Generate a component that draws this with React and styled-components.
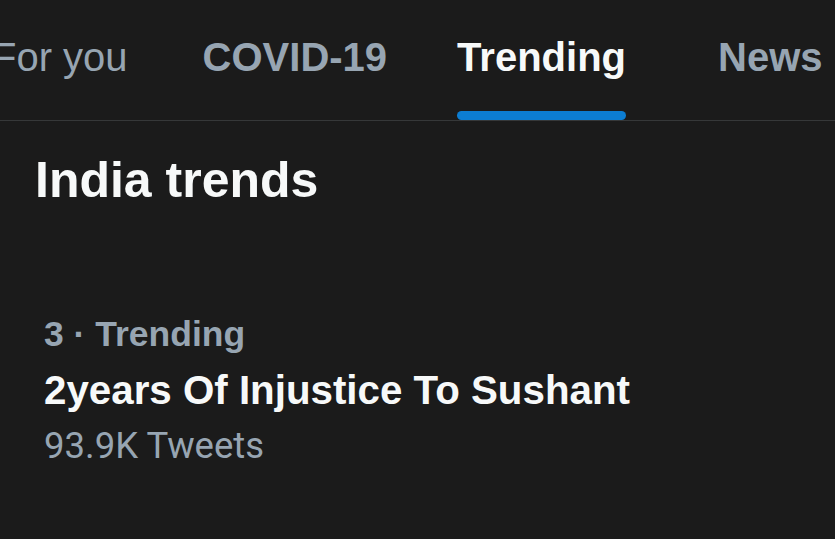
import React from "react";
import styled, { createGlobalStyle } from "styled-components";

const GlobalStyle = createGlobalStyle`
  html, body {
    margin: 0;
    padding: 0;
    background: #1b1b1b;
  }
  body {
    font-family: "Liberation Sans", Arial, sans-serif;
    overflow: hidden;
  }
`;

const tabs = [
  { label: "For you", pad: 0, weight: 400 },
  { label: "COVID-19", pad: 75, weight: 700 },
  { label: "Trending", pad: 70, weight: 700, active: true },
  { label: "News", pad: 92, weight: 700 },
];

const App = () => {
  return (
    <Page>
      <GlobalStyle />
      <TabBar>
        {tabs.map((tab) => (
          <Tab key={tab.label} $pad={tab.pad}>
            <TabLabel $active={tab.active} $weight={tab.weight}>
              {tab.label}
            </TabLabel>
            {tab.active && <Indicator />}
          </Tab>
        ))}
      </TabBar>
      <Heading>India trends</Heading>
      <TrendItem>
        <TrendMeta>3 · Trending</TrendMeta>
        <TrendTitle>2years Of Injustice To Sushant</TrendTitle>
        <TrendCount>93.9K Tweets</TrendCount>
      </TrendItem>
    </Page>
  );
};

export default App;

const Page = styled.div`
  width: 835px;
  height: 539px;
  background: #1b1b1b;
  overflow: hidden;
`;

const TabBar = styled.div`
  display: flex;
  height: 120px;
  border-bottom: 1px solid #363839;
  margin-left: -8px;
`;

const Tab = styled.div`
  display: flex;
  flex-direction: column;
  padding-top: 37px;
  margin-left: ${(p) => p.$pad}px;
  white-space: nowrap;
`;

const TabLabel = styled.div`
  font-size: 40px;
  line-height: 1;
  font-weight: ${(p) => p.$weight};
  color: ${(p) => (p.$active ? "#f7f9f9" : "#97a5b2")};
`;

const Indicator = styled.div`
  margin-top: auto;
  height: 9px;
  border-radius: 5px;
  background: #0c7dd2;
`;

const Heading = styled.h1`
  margin: 34px 0 0 35px;
  font-size: 50px;
  line-height: 1;
  font-weight: 700;
  color: #f7f9f9;
`;

const TrendItem = styled.div`
  display: flex;
  flex-direction: column;
  margin: 112px 0 0 44px;
`;

const TrendMeta = styled.div`
  font-size: 35.5px;
  line-height: 1;
  font-weight: 700;
  color: #97a5b2;
`;

const TrendTitle = styled.div`
  margin-top: 18.5px;
  font-size: 40.3px;
  line-height: 1;
  font-weight: 700;
  color: #f7f9f9;
`;

const TrendCount = styled.div`
  margin-top: 17px;
  font-family: Roboto, "Liberation Sans", sans-serif;
  font-size: 36.5px;
  line-height: 1;
  color: #97a5b2;
`;
